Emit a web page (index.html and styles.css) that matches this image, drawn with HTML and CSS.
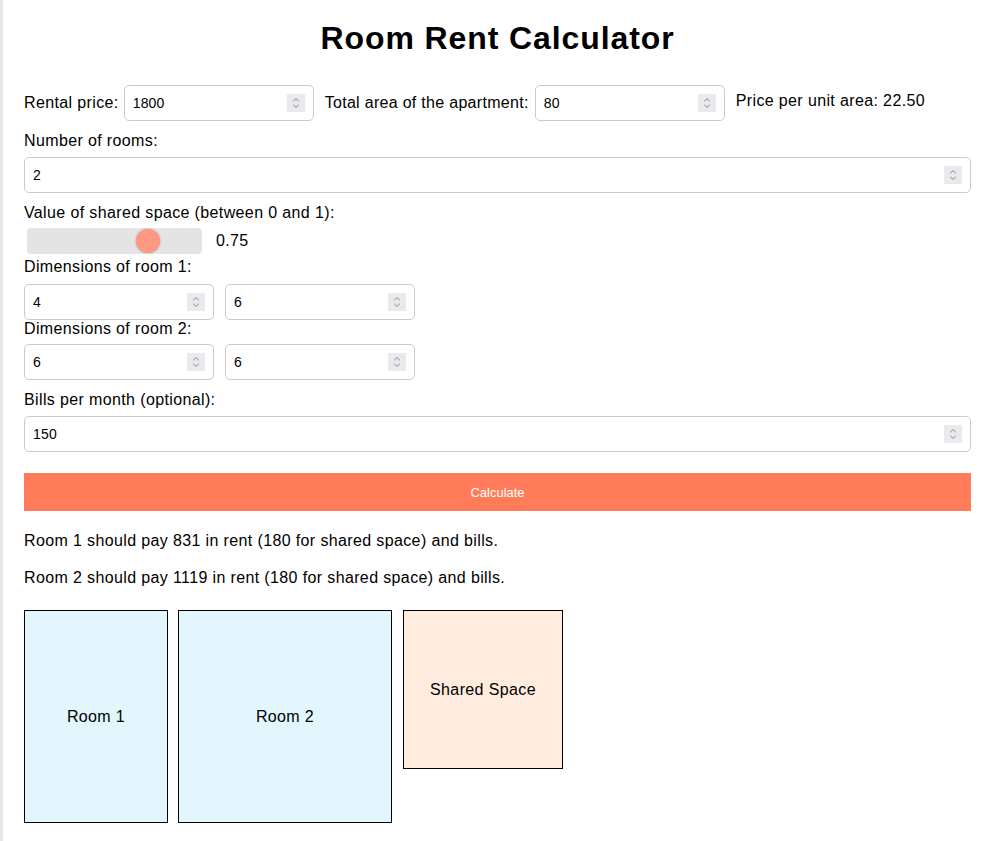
FILE: index.html
```html
<!DOCTYPE html>
<html lang="en">
<head>
<meta charset="utf-8">
<title>Room Rent Calculator</title>
<link rel="stylesheet" href="styles.css">
</head>
<body>
<div class="page">
  <h1 class="title">Room Rent Calculator</h1>

  <div class="row-top">
    <label class="inline-label">Rental price:</label>
    <div class="num num-small">
      <input class="num-input" type="text" value="1800">
      <span class="spin"><svg width="18" height="18" viewBox="0 0 18 18"><path d="M6.2 7.2 L9 4.6 L11.8 7.2 M6.2 10.8 L9 13.4 L11.8 10.8" fill="none" stroke="#8a8a8a" stroke-width="1"/></svg></span>
    </div>
    <label class="inline-label tight">Total area of the apartment:</label>
    <div class="num num-small">
      <input class="num-input" type="text" value="80">
      <span class="spin"><svg width="18" height="18" viewBox="0 0 18 18"><path d="M6.2 7.2 L9 4.6 L11.8 7.2 M6.2 10.8 L9 13.4 L11.8 10.8" fill="none" stroke="#8a8a8a" stroke-width="1"/></svg></span>
    </div>
    <span class="unit-price">Price per unit area: 22.50</span>
  </div>

  <label class="label gap-11">Number of rooms:</label>
  <div class="num num-full gap-7">
    <input class="num-input" type="text" value="2">
    <span class="spin"><svg width="18" height="18" viewBox="0 0 18 18"><path d="M6.2 7.2 L9 4.6 L11.8 7.2 M6.2 10.8 L9 13.4 L11.8 10.8" fill="none" stroke="#8a8a8a" stroke-width="1"/></svg></span>
  </div>

  <label class="label gap-11">Value of shared space (between 0 and 1):</label>
  <div class="slider-row">
    <div class="slider"><span class="thumb"></span></div>
    <span class="slider-value">0.75</span>
  </div>

  <label class="label gap-4">Dimensions of room 1:</label>
  <div class="dims gap-8">
    <div class="num num-small">
      <input class="num-input" type="text" value="4">
      <span class="spin"><svg width="18" height="18" viewBox="0 0 18 18"><path d="M6.2 7.2 L9 4.6 L11.8 7.2 M6.2 10.8 L9 13.4 L11.8 10.8" fill="none" stroke="#8a8a8a" stroke-width="1"/></svg></span>
    </div>
    <div class="num num-small">
      <input class="num-input" type="text" value="6">
      <span class="spin"><svg width="18" height="18" viewBox="0 0 18 18"><path d="M6.2 7.2 L9 4.6 L11.8 7.2 M6.2 10.8 L9 13.4 L11.8 10.8" fill="none" stroke="#8a8a8a" stroke-width="1"/></svg></span>
    </div>
  </div>

  <label class="label">Dimensions of room 2:</label>
  <div class="dims gap-6">
    <div class="num num-small">
      <input class="num-input" type="text" value="6">
      <span class="spin"><svg width="18" height="18" viewBox="0 0 18 18"><path d="M6.2 7.2 L9 4.6 L11.8 7.2 M6.2 10.8 L9 13.4 L11.8 10.8" fill="none" stroke="#8a8a8a" stroke-width="1"/></svg></span>
    </div>
    <div class="num num-small">
      <input class="num-input" type="text" value="6">
      <span class="spin"><svg width="18" height="18" viewBox="0 0 18 18"><path d="M6.2 7.2 L9 4.6 L11.8 7.2 M6.2 10.8 L9 13.4 L11.8 10.8" fill="none" stroke="#8a8a8a" stroke-width="1"/></svg></span>
    </div>
  </div>

  <label class="label gap-11">Bills per month (optional):</label>
  <div class="num num-full gap-7">
    <input class="num-input" type="text" value="150">
    <span class="spin"><svg width="18" height="18" viewBox="0 0 18 18"><path d="M6.2 7.2 L9 4.6 L11.8 7.2 M6.2 10.8 L9 13.4 L11.8 10.8" fill="none" stroke="#8a8a8a" stroke-width="1"/></svg></span>
  </div>

  <button class="calc" type="button">Calculate</button>

  <p class="result first">Room 1 should pay 831 in rent (180 for shared space) and bills.</p>
  <p class="result second">Room 2 should pay 1119 in rent (180 for shared space) and bills.</p>

  <div class="plan">
    <div class="box room room-1">Room 1</div>
    <div class="box room room-2">Room 2</div>
    <div class="box shared">Shared Space</div>
  </div>
</div>
</body>
</html>
```

FILE: styles.css
```css
html, body {
  margin: 0;
  padding: 0;
  background: #ffffff;
}

body {
  font-family: "Liberation Sans", Arial, sans-serif;
  font-size: 16px;
  letter-spacing: 0.37px;
  color: #000;
}

.page {
  box-sizing: border-box;
  min-height: 841px;
  border-left: 3px solid #e6e6e6;
  padding: 0 20px 0 21px;
  display: flex;
  flex-direction: column;
  align-items: flex-start;
}

.title {
  align-self: stretch;
  margin: 20px 0 0;
  font-size: 32px;
  line-height: 37px;
  font-weight: bold;
  letter-spacing: 0.9px;
  text-align: center;
}

.row-top {
  margin-top: 28px;
  display: flex;
  align-items: center;
  height: 36px;
}

.inline-label {
  margin-right: 5px;
  line-height: 18px;
}

.inline-label.tight {
  letter-spacing: 0.3px;
  margin-right: 6px;
}

.row-top .num {
  margin-right: 11px;
}

.unit-price {
  line-height: 18px;
  margin-bottom: 5px;
}

.label {
  display: block;
  line-height: 18px;
}

.gap-11 { margin-top: 11px; }
.gap-8 { margin-top: 8px; }
.gap-7 { margin-top: 7px; }
.gap-6 { margin-top: 6px; }
.gap-4 { margin-top: 4px; }

.num {
  box-sizing: border-box;
  height: 36px;
  display: flex;
  align-items: center;
  border: 1px solid #cbcbcb;
  border-radius: 5px;
  padding: 0 8px 0 8px;
  background: #fff;
}

.num-small {
  width: 190px;
}

.num-full {
  align-self: stretch;
}

.num-input {
  flex: 1;
  min-width: 0;
  border: none;
  outline: none;
  padding: 0;
  margin: 0;
  font-family: "Liberation Sans", Arial, sans-serif;
  font-size: 14px;
  letter-spacing: 0.2px;
  color: #000;
  background: transparent;
}

.spin {
  width: 18px;
  height: 18px;
  background: #e9e9ee;
  display: flex;
}

.slider-row {
  margin-top: 6px;
  display: flex;
  align-items: center;
  height: 26px;
}

.slider {
  box-sizing: border-box;
  margin-left: 3px;
  width: 175px;
  height: 26px;
  background: #e4e4e4;
  border-radius: 4px;
  padding-left: 109px;
  display: flex;
  align-items: center;
}

.thumb {
  width: 24px;
  height: 24px;
  border-radius: 50%;
  background: #ff9882;
  box-shadow: 0 0 2px rgba(0, 0, 0, 0.35);
}

.slider-value {
  margin-left: 14px;
  line-height: 18px;
}

.dims {
  display: flex;
  gap: 11px;
}

.calc {
  align-self: stretch;
  margin-top: 21px;
  height: 38px;
  border: none;
  background: #ff7b59;
  color: #fff;
  font-family: "Liberation Sans", Arial, sans-serif;
  font-size: 13px;
  letter-spacing: 0;
  padding: 0;
  cursor: pointer;
}

.result {
  margin: 0;
  line-height: 18px;
}

.result.first { margin-top: 21px; }
.result.second { margin-top: 19px; }

.plan {
  margin-top: 23px;
  display: flex;
  align-items: flex-start;
}

.box {
  box-sizing: border-box;
  border: 1px solid #000;
  display: flex;
  align-items: center;
  justify-content: center;
}

.room {
  background: #e3f5fd;
  height: 213px;
}

.room-1 {
  width: 144px;
  margin-right: 10px;
}

.room-2 {
  width: 214px;
  margin-right: 11px;
}

.shared {
  width: 160px;
  height: 159px;
  background: #ffecdf;
}
```
